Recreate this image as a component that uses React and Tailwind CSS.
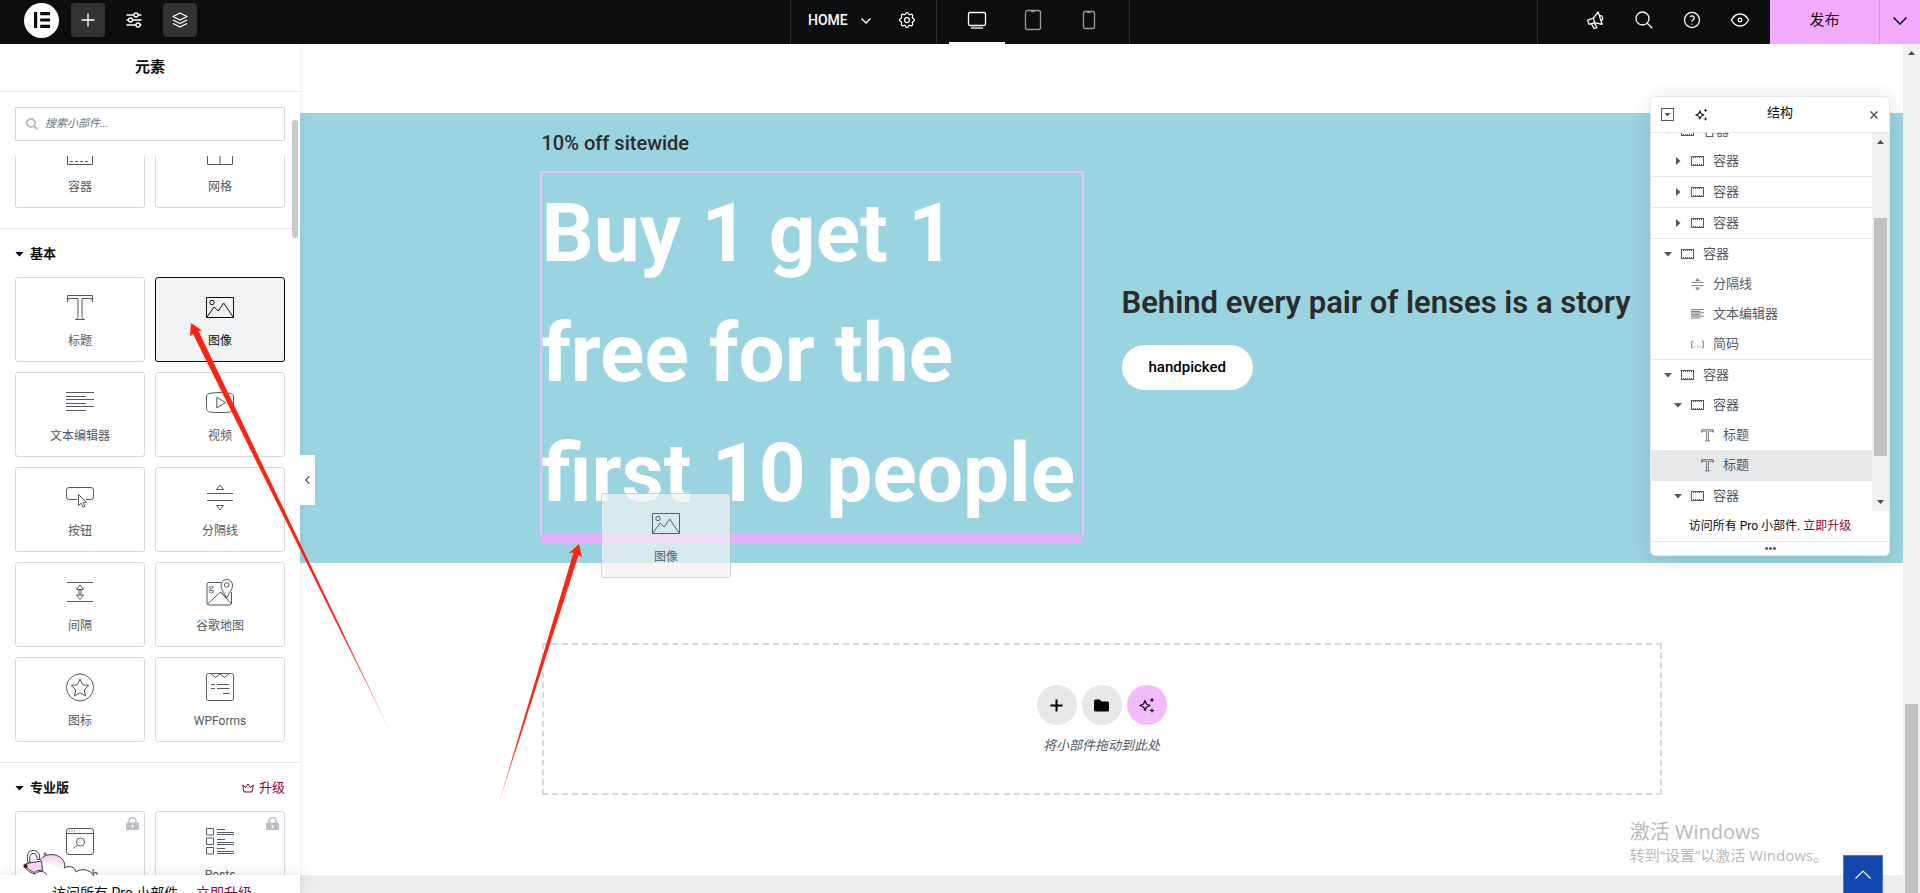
import { TbSettings, TbHelp } from 'react-icons/tb';

const icons = {
  container: (
    <>
      <rect x="1.5" y="3.5" width="25" height="21" />
      <path d="M4 21.5h20" strokeDasharray="3 2" />
    </>
  ),
  grid: <path d="M1.5 3.5h25v21h-25zM14 3.5v21M1.5 13.5h25" />,
  heading: (
    <path d="M1.5 7.5v-6h25v6l-1-3H16v18c0 1.7.5 2.5 2.5 3h-9c2-.5 2.5-1.3 2.5-3v-18H2.5z" />
  ),
  image: (
    <>
      <rect x=".5" y="3.5" width="27" height="20" />
      <circle cx="6" cy="8.5" r="2.2" />
      <path d="M.7 23.3 8.2 13l4 4 5.5-8L27.3 23.3" />
    </>
  ),
  text: <path d="M0 3.5h28M0 7.5h20M0 10.5h28M0 14.5h20M0 17.5h28M0 21.5h20" />,
  video: (
    <>
      <path d="M4 4.3c6-1 14-1 20 0 2.2.4 3.5 1.7 3.5 3.7v11.5c0 2-1.3 3.2-3.5 3.5-6 .8-14 .8-20 0C1.8 22.7.5 21.5.5 19.5V8c0-2 1.3-3.3 3.5-3.7z" />
      <path d="M10.8 8.3v10.5l8.7-5.2z" />
    </>
  ),
  button: (
    <>
      <path d="M11.5 15.5H3a2.5 2.5 0 0 1-2.5-2.5V6A2.5 2.5 0 0 1 3 3.5h22A2.5 2.5 0 0 1 27.5 6v7a2.5 2.5 0 0 1-2.5 2.5h-5" />
      <path d="M12.5 10.5v11l2.7-2.3 1.7 4 2-.9-1.7-3.8 3.3-.3z" />
    </>
  ),
  divider: <path d="M1 9.5h26M1 16.5h26M14 1l3.5 4.5h-7zM14 26l3.5-4.5h-7z" />,
  spacer: (
    <path d="M1 3.5h26M1 22.5h26M14 6l3.5 4.5h-7zM14 20.5l3.5-4.5h-7zM13 10.5V16M15 10.5V16" />
  ),
  map: (
    <>
      <path d="M15 3.5H3a2 2 0 0 0-2 2v18.5a2 2 0 0 0 2 2h20.5a2 2 0 0 0 2-2V13" />
      <path d="M1.5 25 14.5 13l11 12M14.5 13l5 5" />
      <path d="M20.7 19.5c-1.5-5-5.7-8.5-5.7-13.2a5.8 5.8 0 0 1 11.6 0c0 4.7-4.4 8.2-5.9 13.2z" />
      <circle cx="20.7" cy="6" r="2.3" />
      <text x="2.5" y="11.5" fontSize="11" stroke="none" fill="currentColor" fontFamily="Liberation Serif">
        g
      </text>
    </>
  ),
  star: (
    <>
      <circle cx="14" cy="13.5" r="13.5" />
      <path d="m14 5 2.6 5.8 6.2.7-4.6 4.2 1.3 6.2L14 18.7 8.5 21.9l1.3-6.2-4.6-4.2 6.2-.7z" />
    </>
  ),
  wpforms: (
    <>
      <rect x=".5" y="-.5" width="27" height="27" rx="2" />
      <path d="m5-.5 4.5 4 4.5-3.5 4.5 3.500 4.500-4M5 10.500h4M11 10.500h12.500M5 14.500h4M11 14.500h12.500M17 19.500h6.500" />
    </>
  ),
  search: (
    <>
      <rect x=".5" y=".5" width="27" height="26" rx="2.5" />
      <path d="M.5 5.5h27M11.5 17l-4 3.500" />
      <path d="M3 3h6" strokeDasharray="1 1.5" />
      <circle cx="14.5" cy="14" r="4" />
    </>
  ),
  posts: (
    <path d="M.5.5h7v6.500h-7zM.5 10h7v6.500h-7zM.5 19.500h7V26h-7zM11 1.500h8M11 4.500h17M11 6.500h17M11 11.500h8M11 14.500h17M11 16.500h17M11 20.500h8M11 23.500h17M11 25.500h17" />
  ),
  shortcode: <path d="M5 7H1.500v14H5M23 7h3.500v14H23M7.500 18.500h2M13 18.500h2M18.500 18.500h2" />,
};

const basicWidgets = [
  { icon: 'heading', label: '标题' },
  { icon: 'image', label: '图像', active: true },
  { icon: 'text', label: '文本编辑器' },
  { icon: 'video', label: '视频' },
  { icon: 'button', label: '按钮' },
  { icon: 'divider', label: '分隔线' },
  { icon: 'spacer', label: '间隔' },
  { icon: 'map', label: '谷歌地图' },
  { icon: 'star', label: '图标' },
  { icon: 'wpforms', label: 'WPForms' },
];

const treeRows = [
  { level: 0, type: 'container', open: true },
  { level: 1, type: 'container', line: true },
  { level: 1, type: 'container', line: true },
  { level: 1, type: 'container', line: true },
  { level: 0, type: 'container', open: true },
  { level: 1, type: 'divider', label: '分隔线' },
  { level: 1, type: 'text', label: '文本编辑器' },
  { level: 1, type: 'shortcode', label: '简码', line: true },
  { level: 0, type: 'container', open: true },
  { level: 1, type: 'container', open: true },
  { level: 2, type: 'heading', label: '标题' },
  { level: 2, type: 'heading', label: '标题', line: true, active: true },
  { level: 1, type: 'container', open: true },
];

const indents = ['pl-[13px]', 'pl-[23px]', 'pl-[33px]'];

export default function App() {
  return (
    <div className="relative flex h-screen flex-col overflow-hidden bg-white font-['Roboto','Noto_Sans_CJK_SC',sans-serif] text-[#0c0d0e]">
      <TopBar />
      <div className="flex min-h-0 flex-1">
        <Panel />
        <Preview />
        <PageScrollbar />
      </div>
      <Structure />
      <DraggedWidget />
      <Watermark />
      <Arrows />
    </div>
  );
}

function TopBar() {
  return (
    <header className="grid h-11 shrink-0 grid-cols-[1fr_auto_1fr] bg-[#0c0d0e] text-white">
      <div className="flex items-center pb-1 pl-6">
        <button aria-label="Elementor" className="flex size-[35px] items-center justify-center rounded-full bg-white">
          <svg width="16" height="16" fill="#0c0d0e">
            <path d="M0 0h3.2v16H0zM6.2 0H16v3.2H6.2zM6.2 6.4H16v3.2H6.2zM6.2 12.8H16V16H6.2z" />
          </svg>
        </button>
        <div className="ml-3 flex gap-3">
          <BarButton label="添加元素" active>
            <path d="M12 5.5v13M5.5 12h13" />
          </BarButton>
          <BarButton label="站点设置">
            <path d="M4.5 7H12M16 7h3.5M4.5 12h2M10.5 12h9M4.5 17H14M18 17h1.5" />
            <circle cx="14" cy="7" r="2" />
            <circle cx="8.5" cy="12" r="2" />
            <circle cx="16" cy="17" r="2" />
          </BarButton>
          <BarButton label="结构" active>
            <path d="m12 5 7 3.5-7 3.5-7-3.5zM5 12l7 3.5 7-3.5M5 15.5l7 3.5 7-3.5" />
          </BarButton>
        </div>
      </div>

      <div className="flex border-x border-[#2c2d2f]">
        <div className="flex w-[146px] items-center border-r border-[#2c2d2f] pb-1 pl-[17px]">
          <button className="flex items-center text-sm font-medium">
            HOME
            <svg width="10" height="6" fill="none" stroke="currentColor" strokeWidth="1.3" className="ml-[13px] mt-0.5">
              <path d="m.5.5 4.500 4.500L9.500.5" />
            </svg>
          </button>
          <button aria-label="页面设置" className="ml-[26px]">
            <TbSettings size={20} strokeWidth={1.5} />
          </button>
        </div>
        <div className="flex px-3">
          <DeviceTab label="桌面" active>
            <rect x="3.5" y="4.500" width="17" height="13" rx="1.5" />
            <path d="M6 20h12" />
          </DeviceTab>
          <DeviceTab label="平板">
            <rect x="4.5" y="2.5" width="15" height="19" rx="2" />
            <path d="M10 3.500h4" />
          </DeviceTab>
          <DeviceTab label="手机">
            <rect x="6.5" y="3.5" width="11" height="17" rx="2" />
            <path d="M10.500 4.500h3" />
          </DeviceTab>
        </div>
      </div>

      <div className="flex justify-end">
        <div className="flex items-center border-l border-[#2c2d2f] pb-1 pl-[34px] pr-1.5">
          <IconCell label="新功能">
            <g transform="rotate(-18 12 12)">
              <path d="M4 9.500h6l6.500-4.500v13L10 14H4zM10 9.500V14M6.500 14l1 5.500h3L9.500 14M16.500 9a2.500 2.500 0 0 1 0 5" />
            </g>
          </IconCell>
          <IconCell label="查找">
            <circle cx="10.5" cy="10.5" r="6.5" />
            <path d="m15.200 15.200 5 5" />
          </IconCell>
          <button aria-label="帮助" className="flex w-12 justify-center">
            <TbHelp size={20} strokeWidth={1.5} />
          </button>
          <IconCell label="预览">
            <path d="M3.5 12c2-4 5-6 8.500-6s6.500 2 8.500 6c-2 4-5 6-8.500 6s-6.500-2-8.500-6z" />
            <circle cx="12" cy="12" r="1.8" />
          </IconCell>
        </div>
        <button className="w-[109px] bg-[#f0abfc] pb-1 text-[15px] text-[#0c0d0e]">发布</button>
        <button
          aria-label="保存选项"
          className="flex w-[41px] items-center justify-center border-l border-[#e08cf0] bg-[#f0abfc] pb-0.5 text-[#0c0d0e]"
        >
          <svg width="14" height="8" fill="none" stroke="currentColor" strokeWidth="1.5">
            <path d="m.5.5 6.500 6.500L13.500.5" />
          </svg>
        </button>
      </div>
    </header>
  );
}

function Svg24({ children }) {
  return (
    <svg width="24" height="24" fill="none" stroke="currentColor" strokeWidth="1.3" strokeLinejoin="round">
      {children}
    </svg>
  );
}

function BarButton({ label, active, children }) {
  return (
    <button
      aria-label={label}
      className={`flex size-[34px] items-center justify-center rounded ${active ? 'bg-[#323335]' : ''}`}
    >
      <Svg24>{children}</Svg24>
    </button>
  );
}

function IconCell({ label, children }) {
  return (
    <button aria-label={label} className="flex w-12 justify-center">
      <Svg24>{children}</Svg24>
    </button>
  );
}

function DeviceTab({ label, active, children }) {
  return (
    <button
      aria-label={label}
      className={`flex w-14 items-center justify-center border-b-2 pb-0.5 ${
        active ? 'border-white text-white' : 'border-transparent text-[#9a9b9d]'
      }`}
    >
      <Svg24>{children}</Svg24>
    </button>
  );
}

function Panel() {
  return (
    <aside className="relative z-10 flex w-[300px] shrink-0 flex-col bg-white shadow-[0_0_8px_rgba(0,0,0,0.08)]">
      <h1 className="flex h-12 shrink-0 items-center justify-center border-b border-[#e6e8ea] text-[15px] font-bold">
        元素
      </h1>
      <div className="shrink-0 px-[15px] py-[15px]">
        <label className="flex h-[34px] items-center border border-[#d5d8dc] px-2.5">
          <svg width="12" height="12" fill="none" stroke="#babfc5" strokeWidth="2">
            <circle cx="5" cy="5" r="4" />
            <path d="m8 8 3.5 3.5" />
          </svg>
          <input
            type="search"
            aria-label="搜索小部件"
            placeholder="搜索小部件..."
            className="ml-[7px] min-w-0 flex-1 text-[11px] italic outline-none placeholder:text-[#69727d]"
          />
        </label>
      </div>

      <div className="min-h-0 flex-1 overflow-hidden">
        <div className="-mt-[33px]">
          <section className="border-b border-[#e6e8ea] px-[15px] pb-5">
            <div className="grid grid-cols-2 gap-2.5">
              <WidgetCard icon="container" label="容器" />
              <WidgetCard icon="grid" label="网格" />
            </div>
          </section>
          <section className="border-b border-[#e6e8ea] px-[15px] pb-5">
            <CategoryTitle>基本</CategoryTitle>
            <div className="grid grid-cols-2 gap-2.5">
              {basicWidgets.map((w) => (
                <WidgetCard key={w.label} {...w} />
              ))}
            </div>
          </section>
          <section className="px-[15px] pb-5">
            <div className="flex items-center justify-between">
              <CategoryTitle>专业版</CategoryTitle>
              <a href="#upgrade" className="flex items-center gap-[5px] pt-0.5 text-[13px] text-[#93003f]">
                <svg width="12" height="10" fill="none" stroke="currentColor">
                  <path d="M.7 2l1.3 7h8l1.3-7-3 2.5L6 1 3.7 4.5z" />
                </svg>
                升级
              </a>
            </div>
            <div className="grid grid-cols-2 gap-2.5">
              <WidgetCard icon="search" label="Search" locked />
              <WidgetCard icon="posts" label="Posts" locked />
            </div>
          </section>
        </div>
      </div>

      <div className="relative h-[18px] shrink-0 bg-white shadow-[0_-2px_16px_rgba(0,0,0,0.1)]">
        <Clouds />
        <p className="flex gap-3.5 overflow-hidden pl-[52px] pt-2 text-sm leading-5">
          访问所有 Pro 小部件.
          <a href="#upgrade" className="text-[#93003f]">
            立即升级
          </a>
        </p>
      </div>

      {/* Scroll thumb */}
      <div className="absolute right-0.5 top-[76px] h-[118px] w-1.5 rounded-full bg-[#c9c9c9]" />
      {/* Collapse handle */}
      <button
        aria-label="收起面板"
        className="absolute left-full top-[411px] flex h-[50px] w-[15px] items-center justify-center bg-white"
      >
        <svg width="5" height="8" fill="none" stroke="#515962" strokeWidth="1.3">
          <path d="M4 .5.8 4 4 7.5" />
        </svg>
      </button>
    </aside>
  );
}

function CategoryTitle({ children }) {
  return (
    <h2 className="flex h-12 items-center gap-1.5 pt-0.5 text-[13px] font-bold">
      <svg width="9" height="5">
        <path d="M.5 0h8l-4 4.5z" />
      </svg>
      {children}
    </h2>
  );
}

function WidgetIcon({ name, size = 28, stroke = 1 }) {
  return (
    <svg
      width={size}
      height={size}
      viewBox="0 0 28 28"
      fill="none"
      stroke="currentColor"
      strokeWidth={stroke}
      strokeLinejoin="round"
      className="overflow-visible"
    >
      {icons[name]}
    </svg>
  );
}

function WidgetCard({ icon, label, active, locked }) {
  return (
    <button
      className={`relative flex h-[85px] flex-col items-center rounded-[3px] border pt-4 text-xs ${
        active ? 'border-[#0c0d0e] bg-[#f1f2f3] text-[#0c0d0e]' : 'border-[#d5d8dc] bg-white text-[#515962]'
      }`}
    >
      <WidgetIcon name={icon} />
      <span className="mt-[9px] leading-5">{label}</span>
      {locked && (
        <svg width="13" height="13" className="absolute right-[5px] top-[5px]">
          <path d="M3 6V4a3.5 3.5 0 0 1 7 0v2" fill="none" stroke="#babfc5" strokeWidth="1.6" />
          <rect y="5.5" width="13" height="7.5" rx="1" fill="#babfc5" />
          <path d="M6.5 8v3" stroke="#fff" strokeWidth="1.5" />
        </svg>
      )}
    </button>
  );
}

// Unlocked padlock resting on the clouds above the footer banner
function Clouds() {
  return (
    <svg width="82" height="30" fill="#fff" stroke="#3a3a3a" className="absolute -top-[26px] left-[18px]">
      <defs>
        <linearGradient id="cloud" x1="0" y1="0" x2="0" y2="1">
          <stop offset="0" stopColor="#f2cdf0" />
          <stop offset=".7" stopColor="#fff" />
        </linearGradient>
      </defs>
      <path d="M0 28c1-4 4-6 8-7l14-10c6-8 20-7 24 2 1 3 1 5 0 6 5-3 11-1 12 4 5-4 14-3 18 5z" stroke="none" />
      <path
        d="M22 11c6-8 20-7 24 2 1 3 1 5 0 6 5-3 11-1 12 4 5-4 14-3 18 4-6-2-13-2-17 0-6 0-14-2-18-7-5-4-11-6-19-9z"
        fill="url(#cloud)"
        stroke="none"
      />
      <path
        d="M22 11c6-8 20-7 24 2 1 3 1 5 0 6 5-3 11-1 12 4 5-4 14-3 18 4M7 18c2 4 6 6 10 7 4-4 10-3 12 1"
        fill="none"
      />
      <path d="m8 14.500 15.500-2.500 1 9.500c-3-.5-6 0-8 2-3-1-6-3-8.500-6z" fill="#f4d2f3" />
      <path d="M10 13.500C8.500 8 9 1.500 15 1.500s7 4.500 6.500 9h-2.500c0-3.500-.5-6-4-6s-3.500 4-3 8.500z" />
      <path d="M6 15.500h3v3H6z" fill="#222" />
      <path d="M25.500 5h3M27 3.500v3" />
    </svg>
  );
}

function Preview() {
  return (
    <main className="flex min-w-0 flex-1 flex-col overflow-hidden bg-[#ededeb]">
      <div className="shrink-0 bg-white pt-[69px]">
        <section className="bg-[#9ad4e0] pb-[30px] pt-[15px]">
          <div className="mx-auto grid max-w-[1120px] grid-cols-2 gap-10">
            <div>
              <p className="text-xl font-medium leading-[30px] text-[#2b2b2b]">10% off sitewide</p>
              <div className="relative mt-[15px] outline-2 outline-[#f3bafd]">
                <h2 className="text-[82px] font-bold leading-[120px] text-white">
                  Buy 1 get 1 free for the first 10 people
                </h2>
                <div className="absolute left-0 top-full h-2.5 w-full bg-[#e7aefb]" />
              </div>
            </div>
            <div className="flex flex-col items-start justify-center pt-2">
              <h3 className="whitespace-nowrap text-[31px] font-semibold leading-[48px] text-[#2b2b2b]">
                Behind every pair of lenses is a story
              </h3>
              <button className="mt-[18px] rounded-full bg-white px-[27px] py-3 text-[15px] font-medium leading-[21px] text-black">
                handpicked
              </button>
            </div>
          </div>
        </section>

        <section className="py-20">
          <div className="mx-auto flex h-[152px] max-w-[1120px] flex-col items-center border-2 border-dashed border-[#d5d8dc] pt-10">
            <div className="flex gap-[5px]">
              <button aria-label="添加容器" className="flex size-10 items-center justify-center rounded-full bg-[#e6e8ea]">
                <svg width="13" height="13" stroke="#000" strokeWidth="2">
                  <path d="M6.5.5v12M.5 6.5h12" />
                </svg>
              </button>
              <button aria-label="添加模板" className="flex size-10 items-center justify-center rounded-full bg-[#e6e8ea]">
                <svg width="15" height="13">
                  <path d="M1.5.5h4l2 2h6A1.5 1.5 0 0 1 15 4v7a1.5 1.5 0 0 1-1.5 1.5h-12A1.5 1.5 0 0 1 0 11V2A1.5 1.5 0 0 1 1.5.5z" />
                </svg>
              </button>
              <button aria-label="AI" className="flex size-10 items-center justify-center rounded-full bg-[#f3bafd]">
                <Sparkles size={16} />
              </button>
            </div>
            <p className="mt-[11px] text-[13px] italic leading-5 text-[#515962]">将小部件拖动到此处</p>
          </div>
        </section>
      </div>
    </main>
  );
}

function Sparkles({ size }) {
  return (
    <svg width={size} height={size} viewBox="0 0 16 16" fill="none" stroke="currentColor" strokeWidth="1.3">
      <path d="M6 3.5 7.5 7 11 8.5 7.5 10 6 13.5 4.5 10 1 8.500 4.500 7z" strokeLinejoin="round" />
      <path
        d="M13 .5 13.700 2.300 15.500 3l-1.800.7L13 5.500l-.7-1.800L10.500 3l1.800-.7zM13 11l.7 1.800 1.800.7-1.800.7L13 16l-.7-1.800-1.800-.7 1.800-.7z"
        fill="currentColor"
        stroke="none"
      />
    </svg>
  );
}

function PageScrollbar() {
  return (
    <div className="flex w-[17px] shrink-0 flex-col items-center bg-[#f0f0f0] pt-[7px]">
      <svg width="7" height="4" fill="#505050">
        <path d="M0 4h7L3.5 0z" />
      </svg>
      <div className="mt-[649px] w-[13px] flex-1 bg-[#c1c1c1]" />
    </div>
  );
}

function Structure() {
  return (
    <aside className="absolute right-[30px] top-24 z-20 w-60 overflow-hidden rounded-[5px] border border-[#e6e8ea] bg-white shadow-[0_2px_20px_rgba(0,0,0,0.12)]">
      <div className="flex h-9 items-center border-b border-[#e6e8ea] px-2.5 text-[#515962]">
        <button aria-label="全部展开">
          <svg width="13" height="13" fill="none" stroke="currentColor">
            <rect x=".5" y=".5" width="12" height="12" />
            <path d="M3.5 5h6l-3 3.5z" fill="currentColor" stroke="none" />
          </svg>
        </button>
        <button aria-label="AI" className="ml-[21px] text-[#0c0d0e]">
          <Sparkles size={13} />
        </button>
        <h2 className="flex-1 pb-1 pl-6 text-center text-[13px] text-[#0c0d0e]">结构</h2>
        <button aria-label="关闭" className="ml-[42px] mr-px">
          <svg width="8" height="8" stroke="currentColor" strokeWidth="1.5">
            <path d="m.5.5 7 7M7.5.5l-7 7" />
          </svg>
        </button>
      </div>
      <div className="flex h-[378px] overflow-hidden">
        <ul className="-mt-[17px] min-w-0 flex-1 text-[13px] text-[#515962]">
          {treeRows.map((row, i) => (
            <TreeRow key={i} {...row} />
          ))}
        </ul>
        <div className="flex w-[17px] flex-col items-center bg-[#f1f1f1] py-[7px]">
          <svg width="7" height="4" fill="#505050">
            <path d="M0 4h7L3.5 0z" />
          </svg>
          <div className="mt-[74px] h-[238px] w-[13px] bg-[#c1c1c1]" />
          <svg width="7" height="4" fill="#505050" className="mt-auto">
            <path d="M0 0h7L3.5 4z" />
          </svg>
        </div>
      </div>
      <p className="h-[30px] text-center text-xs leading-[30px]">
        访问所有 Pro 小部件.{' '}
        <a href="#upgrade" className="text-[#93003f]">
          立即升级
        </a>
      </p>
      <div className="flex h-3.5 items-center justify-center gap-px border-t border-[#e6e8ea]">
        <span className="size-[3px] rounded-full bg-[#515962]" />
        <span className="size-[3px] rounded-full bg-[#515962]" />
        <span className="size-[3px] rounded-full bg-[#515962]" />
      </div>
    </aside>
  );
}

function TreeRow({ level, type, label = '容器', open, line, active }) {
  const isContainer = type === 'container';
  return (
    <li className={`${line ? 'border-b border-[#e6e8ea]' : ''} ${active ? 'bg-[#e6e8ea]' : ''}`}>
      <button className={`flex h-[30px] w-full items-center ${indents[level]}`}>
        <svg width="8" height="8" fill="currentColor">
          {isContainer && <path d={open ? 'M0 2h8L4 6.5z' : 'M2 0v8l4.5-4z'} />}
        </svg>
        <span className="ml-[9px] mr-[9px] w-[13px]">
          {isContainer ? (
            <svg width="13" height="10" fill="none" stroke="currentColor">
              <path d="M.5 0v10M12.5 0v10M1 .5h11M1 9.5h11" />
              <path d="M2 1.5h9M2 8.5h9" strokeDasharray="1 1" />
            </svg>
          ) : (
            <WidgetIcon name={type} size={13} stroke={1.7} />
          )}
        </span>
        {label}
      </button>
    </li>
  );
}

function DraggedWidget() {
  return (
    <div className="pointer-events-none absolute left-[601px] top-[493px] z-10 flex h-[85px] w-[130px] flex-col items-center rounded-[3px] border border-[#babfc5] bg-[#f1f2f3] pt-4 text-xs text-[#2c3136] opacity-70">
      <WidgetIcon name="image" />
      <span className="mt-[9px] leading-5">图像</span>
    </div>
  );
}

function Watermark() {
  return (
    <>
      <div className="pointer-events-none absolute bottom-[27px] right-[92px] whitespace-nowrap font-['Open_Sans','Noto_Sans_CJK_SC',sans-serif] text-[#b9b9b9]">
        <p className="text-xl leading-6">激活 Windows</p>
        <p className="text-[15px] leading-[22px]">转到“设置”以激活 Windows。</p>
      </div>
      <a
        href="#top"
        aria-label="返回顶部"
        className="absolute bottom-0 right-[37px] flex h-[38px] w-10 items-center justify-center border border-b-0 border-[#4a78d0] bg-[#1346af]"
      >
        <svg width="16" height="9" fill="none" stroke="#fff" strokeWidth="1.2">
          <path d="m.5 8.500 7.500-7.500 7.500 7.500" />
        </svg>
      </a>
    </>
  );
}

function Arrows() {
  return (
    <svg className="pointer-events-none absolute inset-0 z-30 size-full">
      <defs>
        <linearGradient id="fadeA" gradientUnits="userSpaceOnUse" x1="191" y1="323" x2="392" y2="735">
          <stop offset=".75" stopColor="#ff2412" />
          <stop offset="1" stopColor="#ff2412" stopOpacity=".3" />
        </linearGradient>
        <linearGradient id="fadeB" gradientUnits="userSpaceOnUse" x1="579" y1="544" x2="497" y2="809">
          <stop offset=".75" stopColor="#ff2412" />
          <stop offset="1" stopColor="#ff2412" stopOpacity=".3" />
        </linearGradient>
      </defs>
      <path d="M191 323 202 330.500 198.500 331 392 735 193 334 190 336.500z" fill="url(#fadeA)" />
      <path d="M579 544 582 557 578.500 555 497 809 573.500 552.500 569 553z" fill="url(#fadeB)" />
    </svg>
  );
}
